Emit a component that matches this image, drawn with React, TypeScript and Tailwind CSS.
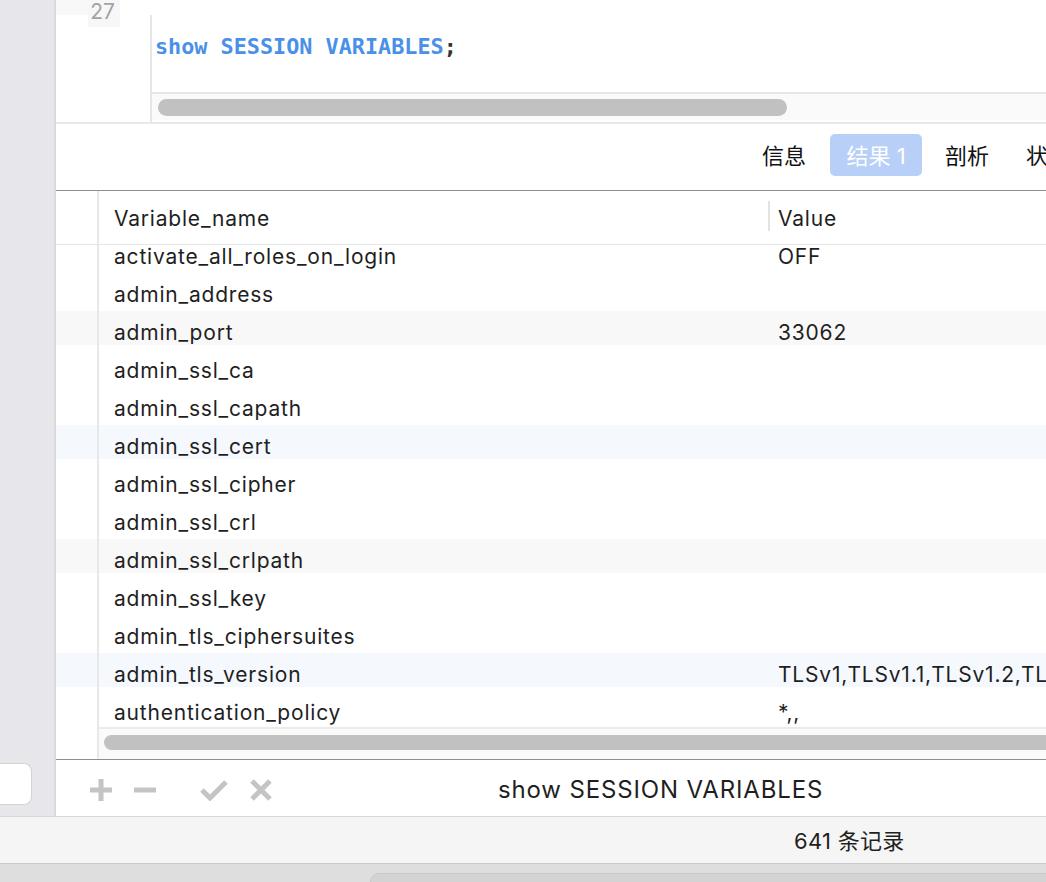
import React from 'react'

type Row = { name: string; value?: string; shade?: 'gray' | 'blue' }

const rows: Row[] = [
  { name: 'activate_all_roles_on_login', value: 'OFF' },
  { name: 'admin_address' },
  { name: 'admin_port', value: '33062', shade: 'gray' },
  { name: 'admin_ssl_ca' },
  { name: 'admin_ssl_capath' },
  { name: 'admin_ssl_cert', shade: 'blue' },
  { name: 'admin_ssl_cipher' },
  { name: 'admin_ssl_crl' },
  { name: 'admin_ssl_crlpath', shade: 'gray' },
  { name: 'admin_ssl_key' },
  { name: 'admin_tls_ciphersuites' },
  { name: 'admin_tls_version', value: 'TLSv1,TLSv1.1,TLSv1.2,TLSv1.3', shade: 'blue' },
  { name: 'authentication_policy', value: '*,,' },
]

const sans = "font-['Inter','Noto_Sans_CJK_SC',sans-serif]"

function ToolIcons() {
  return (
    <div className="flex items-center">
      {/* plus */}
      <svg width="22" height="22" viewBox="0 0 22 22" className="ml-[34px]">
        <path d="M11 0v22M0 11h22" stroke="#c4c4c4" strokeWidth="5" />
      </svg>
      {/* minus */}
      <svg width="22" height="22" viewBox="0 0 22 22" className="ml-[22px]">
        <path d="M0 11h22" stroke="#c4c4c4" strokeWidth="5" />
      </svg>
      {/* check */}
      <svg width="28" height="22" viewBox="0 0 28 22" className="ml-[44px]">
        <path d="M2 11l8 8L26 3" stroke="#c4c4c4" strokeWidth="5" fill="none" />
      </svg>
      {/* cross */}
      <svg width="22" height="22" viewBox="0 0 22 22" className="ml-[22px]">
        <path d="M2 2l18 18M20 2L2 20" stroke="#c4c4c4" strokeWidth="5" />
      </svg>
    </div>
  )
}

export default function App() {
  return (
    <div className={`w-[1046px] h-[882px] overflow-hidden flex flex-col bg-white text-[#1f1f1f] ${sans}`}>
      <div className="flex h-[816px]">
        {/* sidebar */}
        <aside className="w-[56px] shrink-0 bg-[#e7e6eb] border-r-2 border-[#d9d8dd] flex flex-col justify-end pb-[11px]">
          <div className="w-[32px] h-[42px] bg-white rounded-r-lg border border-l-0 border-[#d3d3d6]" />
        </aside>

        <main className="flex-1 min-w-0 flex flex-col overflow-hidden">
          {/* editor */}
          <div className="h-[124px] shrink-0 flex border-b-2 border-[#e8e8e8]">
            <div className="w-[94px] shrink-0 flex items-start">
              <div className="w-[32px] h-[15px] bg-[#f8f8f8]" />
              <div className="w-[32px] h-[27px] bg-[#f7f7f7] text-right pr-[5px] text-[21px] leading-[24px] text-[#a3a3a3]">
                27
              </div>
            </div>
            <div className="flex-1 min-w-0 mt-[15px] border-l-2 border-[#e6e6e6] flex flex-col">
              <div className="h-[77px] pl-[3px] pt-[18px] font-['DejaVu_Sans_Mono',monospace] font-bold text-[21.8px] leading-[28px] whitespace-nowrap">
                <span className="text-[#4a90e8]">show SESSION VARIABLES</span>
                <span className="text-[#333]">;</span>
              </div>
              <div className="h-[28px] border-t-2 border-[#e6e6e6] bg-[#fafafa] pt-[5px] pl-[6px]">
                <div className="w-[629px] h-[17px] rounded-full bg-[#c1c1c1]" />
              </div>
            </div>
          </div>

          {/* tabs */}
          <div className="h-[67px] shrink-0 border-b border-[#8e8e8e] flex items-start pt-[10px] pl-[690px] whitespace-nowrap text-[22px] overflow-hidden">
            <div className="shrink-0 h-[42px] px-[16px] mr-[8px] pt-[3px] flex items-center text-[#111]">信息</div>
            <div className="shrink-0 w-[92px] h-[42px] mr-[7px] pt-[3px] flex items-center justify-center rounded-[5px] bg-[#b8d0f8] text-white">结果 1</div>
            <div className="shrink-0 h-[42px] px-[16px] mr-[5px] pt-[3px] flex items-center text-[#111]">剖析</div>
            <div className="shrink-0 h-[42px] px-[16px] pt-[3px] flex items-center text-[#111]">状态</div>
          </div>

          {/* table header */}
          <div className="h-[54px] shrink-0 flex border-b border-[#e6e6e6] text-[21px] tracking-[0.8px] whitespace-nowrap">
            <div className="w-[43px] shrink-0 border-r-2 border-[#e8e8e8]" />
            <div className="w-[671px] shrink-0 pl-[15px] pt-[2px] flex items-center relative">
              Variable_name
              <div className="absolute right-0 top-[10px] h-[30px] w-[2px] bg-[#e2e2e2]" />
            </div>
            <div className="pl-[8px] pt-[2px] flex items-center">Value</div>
          </div>

          {/* rows */}
          <div className="h-[482px] shrink-0 overflow-hidden">
            <div className="-mt-[12px]">
              {rows.map((r) => {
                const bg =
                  r.shade === 'gray' ? 'bg-[#f8f8f8]' : r.shade === 'blue' ? 'bg-[#f5f8fd]' : 'bg-white'
                return (
                  <div key={r.name} className="h-[38px] flex text-[21px] tracking-[0.8px] whitespace-nowrap">
                    <div className="w-[43px] shrink-0 border-r-2 border-[#e8e8e8] py-[2px]">
                      <div className={`h-full ${bg}`} />
                    </div>
                    <div className="flex-1 py-[2px]">
                      <div className={`h-full flex items-center pt-[9px] ${bg}`}>
                        <div className="w-[671px] shrink-0 pl-[15px]">{r.name}</div>
                        <div className="pl-[8px]">{r.value ?? ''}</div>
                      </div>
                    </div>
                  </div>
                )
              })}
            </div>
          </div>

          {/* table scrollbar */}
          <div className="h-[32px] shrink-0 flex">
            <div className="w-[43px] shrink-0 border-r-2 border-[#e8e8e8]" />
            <div className="flex-1 border-t-2 border-[#ebebeb] bg-[#fafafa] pt-[6px] pl-[5px]">
              <div className="h-[15px] rounded-l-full bg-[#c1c1c1]" />
            </div>
          </div>

          {/* toolbar */}
          <div className="h-[56px] shrink-0 border-t border-[#8e8e8e] flex items-center pt-[5px] whitespace-nowrap">
            <ToolIcons />
            <div className="ml-[226px] text-[24px] tracking-[0.85px] text-[#1f1f1f]">show SESSION VARIABLES</div>
          </div>
        </main>
      </div>

      {/* status bar */}
      <div className="h-[47px] shrink-0 border-t border-[#d8d8d8] bg-[#f5f5f5] flex items-center pt-[2px] pl-[794px] text-[22px] tracking-[0.3px] text-[#1f1f1f] whitespace-nowrap">
        641 条记录
      </div>

      {/* bottom strip */}
      <div className="h-[19px] shrink-0 border-t border-[#c9c9c9] bg-[#dedede] flex items-end pl-[370px]">
        <div className="flex-1 h-[9px] rounded-tl-[10px] bg-[#d3d3d3] border-t border-l border-[#c8c8c8]" />
      </div>
    </div>
  )
}
